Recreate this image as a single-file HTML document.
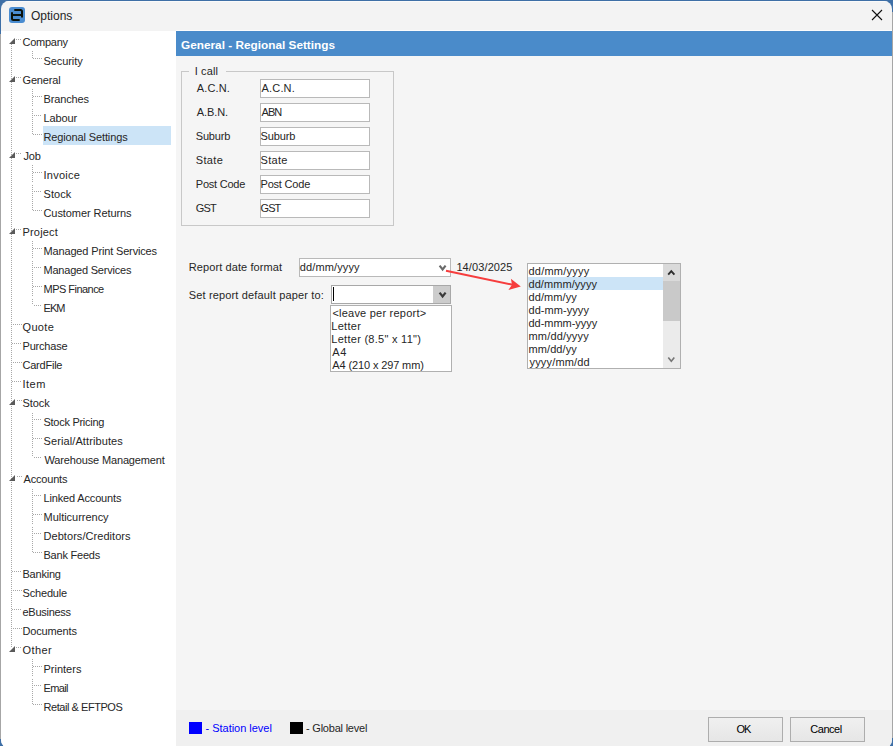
<!DOCTYPE html>
<html><head><meta charset="utf-8">
<style>
*{box-sizing:border-box;margin:0;padding:0}
html,body{width:893px;height:746px;overflow:hidden;background:#3e6fa6;font-family:"Liberation Sans",sans-serif;font-size:11px;color:#262626}
.a{position:absolute;white-space:pre;line-height:13px}
.b{position:absolute}
.btn{background:linear-gradient(#f0f0f0,#e6e6e6);border:1px solid #adadad;text-align:center;line-height:23px;color:#000}
#w{position:absolute;left:0;top:0;width:893px;height:748px;clip-path:inset(1px 1px 0px 1px round 8px)}
</style></head><body>
<div class="b" style="left:0;top:34px;width:1px;height:705px;background:#a6a6a6"></div>
<div class="b" style="left:892px;top:12px;width:1px;height:726px;background:#a6a6a6"></div>
<div id="w">
<div class="b" style="left:0;top:0;width:893px;height:748px;background:#f3f3f3"></div>
<div class="b" style="left:1px;top:1px;width:891px;height:1px;background:#fafafa"></div>
<div class="b" style="left:176px;top:30px;width:716px;height:1px;background:#fcfcfc"></div>
<div class="b" style="left:1px;top:31px;width:175px;height:717px;background:#fff"></div>
<div class="b" style="left:176px;top:31px;width:716px;height:679px;background:#f5f5f5"></div>
<div class="b" style="left:176px;top:710px;width:716px;height:38px;background:#f0f0f0"></div>
<div class="b" style="left:176px;top:31px;width:716px;height:25px;background:#4a8bca"></div>
<div class="a" style="left:181px;top:39px;color:#fff;font-weight:bold;font-size:11.8px">General - Regional Settings</div>
<svg class="b" style="left:9px;top:7px" width="16" height="16" viewBox="0 0 16 16">
  <rect x="0" y="0" width="16" height="16" rx="3" fill="#4a8cd0"/>
  <path d="M5.3 3H11.5Q13 3 13 4.5V10.5M2.5 8H12M3 5.3V11.5Q3 13 4.5 13H10.7" stroke="#0b120b" stroke-width="2" fill="none"/>
</svg>
<div class="a" style="left:31px;top:10px;font-size:12px">Options</div>
<svg class="b" style="left:871px;top:9px" width="12" height="12" viewBox="0 0 12 12">
  <path d="M1 1L11 11M11 1L1 11" stroke="#111" stroke-width="1.1"/>
</svg>
<svg class="b" style="left:0;top:0" width="180" height="746"><rect x="16" y="39" width="1" height="1" fill="#a8a8a8"/><rect x="18" y="39" width="1" height="1" fill="#a8a8a8"/><rect x="20" y="39" width="1" height="1" fill="#a8a8a8"/><rect x="32" y="51" width="1" height="1" fill="#a8a8a8"/><rect x="32" y="53" width="1" height="1" fill="#a8a8a8"/><rect x="32" y="55" width="1" height="1" fill="#a8a8a8"/><rect x="32" y="57" width="1" height="1" fill="#a8a8a8"/><rect x="33" y="58" width="1" height="1" fill="#a8a8a8"/><rect x="35" y="58" width="1" height="1" fill="#a8a8a8"/><rect x="37" y="58" width="1" height="1" fill="#a8a8a8"/><rect x="39" y="58" width="1" height="1" fill="#a8a8a8"/><rect x="41" y="58" width="1" height="1" fill="#a8a8a8"/><rect x="16" y="77" width="1" height="1" fill="#a8a8a8"/><rect x="18" y="77" width="1" height="1" fill="#a8a8a8"/><rect x="20" y="77" width="1" height="1" fill="#a8a8a8"/><rect x="32" y="89" width="1" height="1" fill="#a8a8a8"/><rect x="32" y="91" width="1" height="1" fill="#a8a8a8"/><rect x="32" y="93" width="1" height="1" fill="#a8a8a8"/><rect x="32" y="95" width="1" height="1" fill="#a8a8a8"/><rect x="32" y="97" width="1" height="1" fill="#a8a8a8"/><rect x="32" y="99" width="1" height="1" fill="#a8a8a8"/><rect x="32" y="101" width="1" height="1" fill="#a8a8a8"/><rect x="32" y="103" width="1" height="1" fill="#a8a8a8"/><rect x="32" y="105" width="1" height="1" fill="#a8a8a8"/><rect x="33" y="96" width="1" height="1" fill="#a8a8a8"/><rect x="35" y="96" width="1" height="1" fill="#a8a8a8"/><rect x="37" y="96" width="1" height="1" fill="#a8a8a8"/><rect x="39" y="96" width="1" height="1" fill="#a8a8a8"/><rect x="41" y="96" width="1" height="1" fill="#a8a8a8"/><rect x="32" y="109" width="1" height="1" fill="#a8a8a8"/><rect x="32" y="111" width="1" height="1" fill="#a8a8a8"/><rect x="32" y="113" width="1" height="1" fill="#a8a8a8"/><rect x="32" y="115" width="1" height="1" fill="#a8a8a8"/><rect x="32" y="117" width="1" height="1" fill="#a8a8a8"/><rect x="32" y="119" width="1" height="1" fill="#a8a8a8"/><rect x="32" y="121" width="1" height="1" fill="#a8a8a8"/><rect x="32" y="123" width="1" height="1" fill="#a8a8a8"/><rect x="32" y="125" width="1" height="1" fill="#a8a8a8"/><rect x="34" y="115" width="1" height="1" fill="#a8a8a8"/><rect x="36" y="115" width="1" height="1" fill="#a8a8a8"/><rect x="38" y="115" width="1" height="1" fill="#a8a8a8"/><rect x="40" y="115" width="1" height="1" fill="#a8a8a8"/><rect x="32" y="127" width="1" height="1" fill="#a8a8a8"/><rect x="32" y="129" width="1" height="1" fill="#a8a8a8"/><rect x="32" y="131" width="1" height="1" fill="#a8a8a8"/><rect x="32" y="133" width="1" height="1" fill="#a8a8a8"/><rect x="33" y="134" width="1" height="1" fill="#a8a8a8"/><rect x="35" y="134" width="1" height="1" fill="#a8a8a8"/><rect x="37" y="134" width="1" height="1" fill="#a8a8a8"/><rect x="39" y="134" width="1" height="1" fill="#a8a8a8"/><rect x="41" y="134" width="1" height="1" fill="#a8a8a8"/><rect x="16" y="153" width="1" height="1" fill="#a8a8a8"/><rect x="18" y="153" width="1" height="1" fill="#a8a8a8"/><rect x="20" y="153" width="1" height="1" fill="#a8a8a8"/><rect x="32" y="165" width="1" height="1" fill="#a8a8a8"/><rect x="32" y="167" width="1" height="1" fill="#a8a8a8"/><rect x="32" y="169" width="1" height="1" fill="#a8a8a8"/><rect x="32" y="171" width="1" height="1" fill="#a8a8a8"/><rect x="32" y="173" width="1" height="1" fill="#a8a8a8"/><rect x="32" y="175" width="1" height="1" fill="#a8a8a8"/><rect x="32" y="177" width="1" height="1" fill="#a8a8a8"/><rect x="32" y="179" width="1" height="1" fill="#a8a8a8"/><rect x="32" y="181" width="1" height="1" fill="#a8a8a8"/><rect x="33" y="172" width="1" height="1" fill="#a8a8a8"/><rect x="35" y="172" width="1" height="1" fill="#a8a8a8"/><rect x="37" y="172" width="1" height="1" fill="#a8a8a8"/><rect x="39" y="172" width="1" height="1" fill="#a8a8a8"/><rect x="41" y="172" width="1" height="1" fill="#a8a8a8"/><rect x="32" y="185" width="1" height="1" fill="#a8a8a8"/><rect x="32" y="187" width="1" height="1" fill="#a8a8a8"/><rect x="32" y="189" width="1" height="1" fill="#a8a8a8"/><rect x="32" y="191" width="1" height="1" fill="#a8a8a8"/><rect x="32" y="193" width="1" height="1" fill="#a8a8a8"/><rect x="32" y="195" width="1" height="1" fill="#a8a8a8"/><rect x="32" y="197" width="1" height="1" fill="#a8a8a8"/><rect x="32" y="199" width="1" height="1" fill="#a8a8a8"/><rect x="32" y="201" width="1" height="1" fill="#a8a8a8"/><rect x="34" y="191" width="1" height="1" fill="#a8a8a8"/><rect x="36" y="191" width="1" height="1" fill="#a8a8a8"/><rect x="38" y="191" width="1" height="1" fill="#a8a8a8"/><rect x="40" y="191" width="1" height="1" fill="#a8a8a8"/><rect x="32" y="203" width="1" height="1" fill="#a8a8a8"/><rect x="32" y="205" width="1" height="1" fill="#a8a8a8"/><rect x="32" y="207" width="1" height="1" fill="#a8a8a8"/><rect x="32" y="209" width="1" height="1" fill="#a8a8a8"/><rect x="33" y="210" width="1" height="1" fill="#a8a8a8"/><rect x="35" y="210" width="1" height="1" fill="#a8a8a8"/><rect x="37" y="210" width="1" height="1" fill="#a8a8a8"/><rect x="39" y="210" width="1" height="1" fill="#a8a8a8"/><rect x="41" y="210" width="1" height="1" fill="#a8a8a8"/><rect x="16" y="229" width="1" height="1" fill="#a8a8a8"/><rect x="18" y="229" width="1" height="1" fill="#a8a8a8"/><rect x="20" y="229" width="1" height="1" fill="#a8a8a8"/><rect x="32" y="241" width="1" height="1" fill="#a8a8a8"/><rect x="32" y="243" width="1" height="1" fill="#a8a8a8"/><rect x="32" y="245" width="1" height="1" fill="#a8a8a8"/><rect x="32" y="247" width="1" height="1" fill="#a8a8a8"/><rect x="32" y="249" width="1" height="1" fill="#a8a8a8"/><rect x="32" y="251" width="1" height="1" fill="#a8a8a8"/><rect x="32" y="253" width="1" height="1" fill="#a8a8a8"/><rect x="32" y="255" width="1" height="1" fill="#a8a8a8"/><rect x="32" y="257" width="1" height="1" fill="#a8a8a8"/><rect x="33" y="248" width="1" height="1" fill="#a8a8a8"/><rect x="35" y="248" width="1" height="1" fill="#a8a8a8"/><rect x="37" y="248" width="1" height="1" fill="#a8a8a8"/><rect x="39" y="248" width="1" height="1" fill="#a8a8a8"/><rect x="41" y="248" width="1" height="1" fill="#a8a8a8"/><rect x="32" y="261" width="1" height="1" fill="#a8a8a8"/><rect x="32" y="263" width="1" height="1" fill="#a8a8a8"/><rect x="32" y="265" width="1" height="1" fill="#a8a8a8"/><rect x="32" y="267" width="1" height="1" fill="#a8a8a8"/><rect x="32" y="269" width="1" height="1" fill="#a8a8a8"/><rect x="32" y="271" width="1" height="1" fill="#a8a8a8"/><rect x="32" y="273" width="1" height="1" fill="#a8a8a8"/><rect x="32" y="275" width="1" height="1" fill="#a8a8a8"/><rect x="32" y="277" width="1" height="1" fill="#a8a8a8"/><rect x="34" y="267" width="1" height="1" fill="#a8a8a8"/><rect x="36" y="267" width="1" height="1" fill="#a8a8a8"/><rect x="38" y="267" width="1" height="1" fill="#a8a8a8"/><rect x="40" y="267" width="1" height="1" fill="#a8a8a8"/><rect x="32" y="279" width="1" height="1" fill="#a8a8a8"/><rect x="32" y="281" width="1" height="1" fill="#a8a8a8"/><rect x="32" y="283" width="1" height="1" fill="#a8a8a8"/><rect x="32" y="285" width="1" height="1" fill="#a8a8a8"/><rect x="32" y="287" width="1" height="1" fill="#a8a8a8"/><rect x="32" y="289" width="1" height="1" fill="#a8a8a8"/><rect x="32" y="291" width="1" height="1" fill="#a8a8a8"/><rect x="32" y="293" width="1" height="1" fill="#a8a8a8"/><rect x="32" y="295" width="1" height="1" fill="#a8a8a8"/><rect x="33" y="286" width="1" height="1" fill="#a8a8a8"/><rect x="35" y="286" width="1" height="1" fill="#a8a8a8"/><rect x="37" y="286" width="1" height="1" fill="#a8a8a8"/><rect x="39" y="286" width="1" height="1" fill="#a8a8a8"/><rect x="41" y="286" width="1" height="1" fill="#a8a8a8"/><rect x="32" y="299" width="1" height="1" fill="#a8a8a8"/><rect x="32" y="301" width="1" height="1" fill="#a8a8a8"/><rect x="32" y="303" width="1" height="1" fill="#a8a8a8"/><rect x="34" y="305" width="1" height="1" fill="#a8a8a8"/><rect x="36" y="305" width="1" height="1" fill="#a8a8a8"/><rect x="38" y="305" width="1" height="1" fill="#a8a8a8"/><rect x="40" y="305" width="1" height="1" fill="#a8a8a8"/><rect x="13" y="324" width="1" height="1" fill="#a8a8a8"/><rect x="15" y="324" width="1" height="1" fill="#a8a8a8"/><rect x="17" y="324" width="1" height="1" fill="#a8a8a8"/><rect x="19" y="324" width="1" height="1" fill="#a8a8a8"/><rect x="21" y="324" width="1" height="1" fill="#a8a8a8"/><rect x="12" y="343" width="1" height="1" fill="#a8a8a8"/><rect x="14" y="343" width="1" height="1" fill="#a8a8a8"/><rect x="16" y="343" width="1" height="1" fill="#a8a8a8"/><rect x="18" y="343" width="1" height="1" fill="#a8a8a8"/><rect x="20" y="343" width="1" height="1" fill="#a8a8a8"/><rect x="13" y="362" width="1" height="1" fill="#a8a8a8"/><rect x="15" y="362" width="1" height="1" fill="#a8a8a8"/><rect x="17" y="362" width="1" height="1" fill="#a8a8a8"/><rect x="19" y="362" width="1" height="1" fill="#a8a8a8"/><rect x="21" y="362" width="1" height="1" fill="#a8a8a8"/><rect x="12" y="381" width="1" height="1" fill="#a8a8a8"/><rect x="14" y="381" width="1" height="1" fill="#a8a8a8"/><rect x="16" y="381" width="1" height="1" fill="#a8a8a8"/><rect x="18" y="381" width="1" height="1" fill="#a8a8a8"/><rect x="20" y="381" width="1" height="1" fill="#a8a8a8"/><rect x="17" y="400" width="1" height="1" fill="#a8a8a8"/><rect x="19" y="400" width="1" height="1" fill="#a8a8a8"/><rect x="21" y="400" width="1" height="1" fill="#a8a8a8"/><rect x="32" y="413" width="1" height="1" fill="#a8a8a8"/><rect x="32" y="415" width="1" height="1" fill="#a8a8a8"/><rect x="32" y="417" width="1" height="1" fill="#a8a8a8"/><rect x="32" y="419" width="1" height="1" fill="#a8a8a8"/><rect x="32" y="421" width="1" height="1" fill="#a8a8a8"/><rect x="32" y="423" width="1" height="1" fill="#a8a8a8"/><rect x="32" y="425" width="1" height="1" fill="#a8a8a8"/><rect x="32" y="427" width="1" height="1" fill="#a8a8a8"/><rect x="32" y="429" width="1" height="1" fill="#a8a8a8"/><rect x="34" y="419" width="1" height="1" fill="#a8a8a8"/><rect x="36" y="419" width="1" height="1" fill="#a8a8a8"/><rect x="38" y="419" width="1" height="1" fill="#a8a8a8"/><rect x="40" y="419" width="1" height="1" fill="#a8a8a8"/><rect x="32" y="431" width="1" height="1" fill="#a8a8a8"/><rect x="32" y="433" width="1" height="1" fill="#a8a8a8"/><rect x="32" y="435" width="1" height="1" fill="#a8a8a8"/><rect x="32" y="437" width="1" height="1" fill="#a8a8a8"/><rect x="32" y="439" width="1" height="1" fill="#a8a8a8"/><rect x="32" y="441" width="1" height="1" fill="#a8a8a8"/><rect x="32" y="443" width="1" height="1" fill="#a8a8a8"/><rect x="32" y="445" width="1" height="1" fill="#a8a8a8"/><rect x="32" y="447" width="1" height="1" fill="#a8a8a8"/><rect x="33" y="438" width="1" height="1" fill="#a8a8a8"/><rect x="35" y="438" width="1" height="1" fill="#a8a8a8"/><rect x="37" y="438" width="1" height="1" fill="#a8a8a8"/><rect x="39" y="438" width="1" height="1" fill="#a8a8a8"/><rect x="41" y="438" width="1" height="1" fill="#a8a8a8"/><rect x="32" y="451" width="1" height="1" fill="#a8a8a8"/><rect x="32" y="453" width="1" height="1" fill="#a8a8a8"/><rect x="32" y="455" width="1" height="1" fill="#a8a8a8"/><rect x="34" y="457" width="1" height="1" fill="#a8a8a8"/><rect x="36" y="457" width="1" height="1" fill="#a8a8a8"/><rect x="38" y="457" width="1" height="1" fill="#a8a8a8"/><rect x="40" y="457" width="1" height="1" fill="#a8a8a8"/><rect x="17" y="476" width="1" height="1" fill="#a8a8a8"/><rect x="19" y="476" width="1" height="1" fill="#a8a8a8"/><rect x="21" y="476" width="1" height="1" fill="#a8a8a8"/><rect x="32" y="489" width="1" height="1" fill="#a8a8a8"/><rect x="32" y="491" width="1" height="1" fill="#a8a8a8"/><rect x="32" y="493" width="1" height="1" fill="#a8a8a8"/><rect x="32" y="495" width="1" height="1" fill="#a8a8a8"/><rect x="32" y="497" width="1" height="1" fill="#a8a8a8"/><rect x="32" y="499" width="1" height="1" fill="#a8a8a8"/><rect x="32" y="501" width="1" height="1" fill="#a8a8a8"/><rect x="32" y="503" width="1" height="1" fill="#a8a8a8"/><rect x="32" y="505" width="1" height="1" fill="#a8a8a8"/><rect x="34" y="495" width="1" height="1" fill="#a8a8a8"/><rect x="36" y="495" width="1" height="1" fill="#a8a8a8"/><rect x="38" y="495" width="1" height="1" fill="#a8a8a8"/><rect x="40" y="495" width="1" height="1" fill="#a8a8a8"/><rect x="32" y="507" width="1" height="1" fill="#a8a8a8"/><rect x="32" y="509" width="1" height="1" fill="#a8a8a8"/><rect x="32" y="511" width="1" height="1" fill="#a8a8a8"/><rect x="32" y="513" width="1" height="1" fill="#a8a8a8"/><rect x="32" y="515" width="1" height="1" fill="#a8a8a8"/><rect x="32" y="517" width="1" height="1" fill="#a8a8a8"/><rect x="32" y="519" width="1" height="1" fill="#a8a8a8"/><rect x="32" y="521" width="1" height="1" fill="#a8a8a8"/><rect x="32" y="523" width="1" height="1" fill="#a8a8a8"/><rect x="33" y="514" width="1" height="1" fill="#a8a8a8"/><rect x="35" y="514" width="1" height="1" fill="#a8a8a8"/><rect x="37" y="514" width="1" height="1" fill="#a8a8a8"/><rect x="39" y="514" width="1" height="1" fill="#a8a8a8"/><rect x="41" y="514" width="1" height="1" fill="#a8a8a8"/><rect x="32" y="527" width="1" height="1" fill="#a8a8a8"/><rect x="32" y="529" width="1" height="1" fill="#a8a8a8"/><rect x="32" y="531" width="1" height="1" fill="#a8a8a8"/><rect x="32" y="533" width="1" height="1" fill="#a8a8a8"/><rect x="32" y="535" width="1" height="1" fill="#a8a8a8"/><rect x="32" y="537" width="1" height="1" fill="#a8a8a8"/><rect x="32" y="539" width="1" height="1" fill="#a8a8a8"/><rect x="32" y="541" width="1" height="1" fill="#a8a8a8"/><rect x="32" y="543" width="1" height="1" fill="#a8a8a8"/><rect x="34" y="533" width="1" height="1" fill="#a8a8a8"/><rect x="36" y="533" width="1" height="1" fill="#a8a8a8"/><rect x="38" y="533" width="1" height="1" fill="#a8a8a8"/><rect x="40" y="533" width="1" height="1" fill="#a8a8a8"/><rect x="32" y="545" width="1" height="1" fill="#a8a8a8"/><rect x="32" y="547" width="1" height="1" fill="#a8a8a8"/><rect x="32" y="549" width="1" height="1" fill="#a8a8a8"/><rect x="32" y="551" width="1" height="1" fill="#a8a8a8"/><rect x="33" y="552" width="1" height="1" fill="#a8a8a8"/><rect x="35" y="552" width="1" height="1" fill="#a8a8a8"/><rect x="37" y="552" width="1" height="1" fill="#a8a8a8"/><rect x="39" y="552" width="1" height="1" fill="#a8a8a8"/><rect x="41" y="552" width="1" height="1" fill="#a8a8a8"/><rect x="12" y="571" width="1" height="1" fill="#a8a8a8"/><rect x="14" y="571" width="1" height="1" fill="#a8a8a8"/><rect x="16" y="571" width="1" height="1" fill="#a8a8a8"/><rect x="18" y="571" width="1" height="1" fill="#a8a8a8"/><rect x="20" y="571" width="1" height="1" fill="#a8a8a8"/><rect x="13" y="590" width="1" height="1" fill="#a8a8a8"/><rect x="15" y="590" width="1" height="1" fill="#a8a8a8"/><rect x="17" y="590" width="1" height="1" fill="#a8a8a8"/><rect x="19" y="590" width="1" height="1" fill="#a8a8a8"/><rect x="21" y="590" width="1" height="1" fill="#a8a8a8"/><rect x="12" y="609" width="1" height="1" fill="#a8a8a8"/><rect x="14" y="609" width="1" height="1" fill="#a8a8a8"/><rect x="16" y="609" width="1" height="1" fill="#a8a8a8"/><rect x="18" y="609" width="1" height="1" fill="#a8a8a8"/><rect x="20" y="609" width="1" height="1" fill="#a8a8a8"/><rect x="13" y="628" width="1" height="1" fill="#a8a8a8"/><rect x="15" y="628" width="1" height="1" fill="#a8a8a8"/><rect x="17" y="628" width="1" height="1" fill="#a8a8a8"/><rect x="19" y="628" width="1" height="1" fill="#a8a8a8"/><rect x="21" y="628" width="1" height="1" fill="#a8a8a8"/><rect x="16" y="647" width="1" height="1" fill="#a8a8a8"/><rect x="18" y="647" width="1" height="1" fill="#a8a8a8"/><rect x="20" y="647" width="1" height="1" fill="#a8a8a8"/><rect x="32" y="659" width="1" height="1" fill="#a8a8a8"/><rect x="32" y="661" width="1" height="1" fill="#a8a8a8"/><rect x="32" y="663" width="1" height="1" fill="#a8a8a8"/><rect x="32" y="665" width="1" height="1" fill="#a8a8a8"/><rect x="32" y="667" width="1" height="1" fill="#a8a8a8"/><rect x="32" y="669" width="1" height="1" fill="#a8a8a8"/><rect x="32" y="671" width="1" height="1" fill="#a8a8a8"/><rect x="32" y="673" width="1" height="1" fill="#a8a8a8"/><rect x="32" y="675" width="1" height="1" fill="#a8a8a8"/><rect x="33" y="666" width="1" height="1" fill="#a8a8a8"/><rect x="35" y="666" width="1" height="1" fill="#a8a8a8"/><rect x="37" y="666" width="1" height="1" fill="#a8a8a8"/><rect x="39" y="666" width="1" height="1" fill="#a8a8a8"/><rect x="41" y="666" width="1" height="1" fill="#a8a8a8"/><rect x="32" y="679" width="1" height="1" fill="#a8a8a8"/><rect x="32" y="681" width="1" height="1" fill="#a8a8a8"/><rect x="32" y="683" width="1" height="1" fill="#a8a8a8"/><rect x="32" y="685" width="1" height="1" fill="#a8a8a8"/><rect x="32" y="687" width="1" height="1" fill="#a8a8a8"/><rect x="32" y="689" width="1" height="1" fill="#a8a8a8"/><rect x="32" y="691" width="1" height="1" fill="#a8a8a8"/><rect x="32" y="693" width="1" height="1" fill="#a8a8a8"/><rect x="32" y="695" width="1" height="1" fill="#a8a8a8"/><rect x="34" y="685" width="1" height="1" fill="#a8a8a8"/><rect x="36" y="685" width="1" height="1" fill="#a8a8a8"/><rect x="38" y="685" width="1" height="1" fill="#a8a8a8"/><rect x="40" y="685" width="1" height="1" fill="#a8a8a8"/><rect x="32" y="697" width="1" height="1" fill="#a8a8a8"/><rect x="32" y="699" width="1" height="1" fill="#a8a8a8"/><rect x="32" y="701" width="1" height="1" fill="#a8a8a8"/><rect x="32" y="703" width="1" height="1" fill="#a8a8a8"/><rect x="33" y="704" width="1" height="1" fill="#a8a8a8"/><rect x="35" y="704" width="1" height="1" fill="#a8a8a8"/><rect x="37" y="704" width="1" height="1" fill="#a8a8a8"/><rect x="39" y="704" width="1" height="1" fill="#a8a8a8"/><rect x="41" y="704" width="1" height="1" fill="#a8a8a8"/><rect x="11" y="44" width="1" height="1" fill="#a8a8a8"/><rect x="11" y="46" width="1" height="1" fill="#a8a8a8"/><rect x="11" y="48" width="1" height="1" fill="#a8a8a8"/><rect x="11" y="50" width="1" height="1" fill="#a8a8a8"/><rect x="11" y="52" width="1" height="1" fill="#a8a8a8"/><rect x="11" y="54" width="1" height="1" fill="#a8a8a8"/><rect x="11" y="56" width="1" height="1" fill="#a8a8a8"/><rect x="11" y="58" width="1" height="1" fill="#a8a8a8"/><rect x="11" y="60" width="1" height="1" fill="#a8a8a8"/><rect x="11" y="62" width="1" height="1" fill="#a8a8a8"/><rect x="11" y="64" width="1" height="1" fill="#a8a8a8"/><rect x="11" y="66" width="1" height="1" fill="#a8a8a8"/><rect x="11" y="68" width="1" height="1" fill="#a8a8a8"/><rect x="11" y="70" width="1" height="1" fill="#a8a8a8"/><rect x="11" y="72" width="1" height="1" fill="#a8a8a8"/><rect x="11" y="74" width="1" height="1" fill="#a8a8a8"/><rect x="11" y="76" width="1" height="1" fill="#a8a8a8"/><rect x="11" y="78" width="1" height="1" fill="#a8a8a8"/><rect x="11" y="80" width="1" height="1" fill="#a8a8a8"/><rect x="11" y="82" width="1" height="1" fill="#a8a8a8"/><rect x="11" y="84" width="1" height="1" fill="#a8a8a8"/><rect x="11" y="86" width="1" height="1" fill="#a8a8a8"/><rect x="11" y="88" width="1" height="1" fill="#a8a8a8"/><rect x="11" y="90" width="1" height="1" fill="#a8a8a8"/><rect x="11" y="92" width="1" height="1" fill="#a8a8a8"/><rect x="11" y="94" width="1" height="1" fill="#a8a8a8"/><rect x="11" y="96" width="1" height="1" fill="#a8a8a8"/><rect x="11" y="98" width="1" height="1" fill="#a8a8a8"/><rect x="11" y="100" width="1" height="1" fill="#a8a8a8"/><rect x="11" y="102" width="1" height="1" fill="#a8a8a8"/><rect x="11" y="104" width="1" height="1" fill="#a8a8a8"/><rect x="11" y="106" width="1" height="1" fill="#a8a8a8"/><rect x="11" y="108" width="1" height="1" fill="#a8a8a8"/><rect x="11" y="110" width="1" height="1" fill="#a8a8a8"/><rect x="11" y="112" width="1" height="1" fill="#a8a8a8"/><rect x="11" y="114" width="1" height="1" fill="#a8a8a8"/><rect x="11" y="116" width="1" height="1" fill="#a8a8a8"/><rect x="11" y="118" width="1" height="1" fill="#a8a8a8"/><rect x="11" y="120" width="1" height="1" fill="#a8a8a8"/><rect x="11" y="122" width="1" height="1" fill="#a8a8a8"/><rect x="11" y="124" width="1" height="1" fill="#a8a8a8"/><rect x="11" y="126" width="1" height="1" fill="#a8a8a8"/><rect x="11" y="128" width="1" height="1" fill="#a8a8a8"/><rect x="11" y="130" width="1" height="1" fill="#a8a8a8"/><rect x="11" y="132" width="1" height="1" fill="#a8a8a8"/><rect x="11" y="134" width="1" height="1" fill="#a8a8a8"/><rect x="11" y="136" width="1" height="1" fill="#a8a8a8"/><rect x="11" y="138" width="1" height="1" fill="#a8a8a8"/><rect x="11" y="140" width="1" height="1" fill="#a8a8a8"/><rect x="11" y="142" width="1" height="1" fill="#a8a8a8"/><rect x="11" y="144" width="1" height="1" fill="#a8a8a8"/><rect x="11" y="146" width="1" height="1" fill="#a8a8a8"/><rect x="11" y="148" width="1" height="1" fill="#a8a8a8"/><rect x="11" y="150" width="1" height="1" fill="#a8a8a8"/><rect x="11" y="152" width="1" height="1" fill="#a8a8a8"/><rect x="11" y="154" width="1" height="1" fill="#a8a8a8"/><rect x="11" y="156" width="1" height="1" fill="#a8a8a8"/><rect x="11" y="158" width="1" height="1" fill="#a8a8a8"/><rect x="11" y="160" width="1" height="1" fill="#a8a8a8"/><rect x="11" y="162" width="1" height="1" fill="#a8a8a8"/><rect x="11" y="164" width="1" height="1" fill="#a8a8a8"/><rect x="11" y="166" width="1" height="1" fill="#a8a8a8"/><rect x="11" y="168" width="1" height="1" fill="#a8a8a8"/><rect x="11" y="170" width="1" height="1" fill="#a8a8a8"/><rect x="11" y="172" width="1" height="1" fill="#a8a8a8"/><rect x="11" y="174" width="1" height="1" fill="#a8a8a8"/><rect x="11" y="176" width="1" height="1" fill="#a8a8a8"/><rect x="11" y="178" width="1" height="1" fill="#a8a8a8"/><rect x="11" y="180" width="1" height="1" fill="#a8a8a8"/><rect x="11" y="182" width="1" height="1" fill="#a8a8a8"/><rect x="11" y="184" width="1" height="1" fill="#a8a8a8"/><rect x="11" y="186" width="1" height="1" fill="#a8a8a8"/><rect x="11" y="188" width="1" height="1" fill="#a8a8a8"/><rect x="11" y="190" width="1" height="1" fill="#a8a8a8"/><rect x="11" y="192" width="1" height="1" fill="#a8a8a8"/><rect x="11" y="194" width="1" height="1" fill="#a8a8a8"/><rect x="11" y="196" width="1" height="1" fill="#a8a8a8"/><rect x="11" y="198" width="1" height="1" fill="#a8a8a8"/><rect x="11" y="200" width="1" height="1" fill="#a8a8a8"/><rect x="11" y="202" width="1" height="1" fill="#a8a8a8"/><rect x="11" y="204" width="1" height="1" fill="#a8a8a8"/><rect x="11" y="206" width="1" height="1" fill="#a8a8a8"/><rect x="11" y="208" width="1" height="1" fill="#a8a8a8"/><rect x="11" y="210" width="1" height="1" fill="#a8a8a8"/><rect x="11" y="212" width="1" height="1" fill="#a8a8a8"/><rect x="11" y="214" width="1" height="1" fill="#a8a8a8"/><rect x="11" y="216" width="1" height="1" fill="#a8a8a8"/><rect x="11" y="218" width="1" height="1" fill="#a8a8a8"/><rect x="11" y="220" width="1" height="1" fill="#a8a8a8"/><rect x="11" y="222" width="1" height="1" fill="#a8a8a8"/><rect x="11" y="224" width="1" height="1" fill="#a8a8a8"/><rect x="11" y="226" width="1" height="1" fill="#a8a8a8"/><rect x="11" y="228" width="1" height="1" fill="#a8a8a8"/><rect x="11" y="230" width="1" height="1" fill="#a8a8a8"/><rect x="11" y="232" width="1" height="1" fill="#a8a8a8"/><rect x="11" y="234" width="1" height="1" fill="#a8a8a8"/><rect x="11" y="236" width="1" height="1" fill="#a8a8a8"/><rect x="11" y="238" width="1" height="1" fill="#a8a8a8"/><rect x="11" y="240" width="1" height="1" fill="#a8a8a8"/><rect x="11" y="242" width="1" height="1" fill="#a8a8a8"/><rect x="11" y="244" width="1" height="1" fill="#a8a8a8"/><rect x="11" y="246" width="1" height="1" fill="#a8a8a8"/><rect x="11" y="248" width="1" height="1" fill="#a8a8a8"/><rect x="11" y="250" width="1" height="1" fill="#a8a8a8"/><rect x="11" y="252" width="1" height="1" fill="#a8a8a8"/><rect x="11" y="254" width="1" height="1" fill="#a8a8a8"/><rect x="11" y="256" width="1" height="1" fill="#a8a8a8"/><rect x="11" y="258" width="1" height="1" fill="#a8a8a8"/><rect x="11" y="260" width="1" height="1" fill="#a8a8a8"/><rect x="11" y="262" width="1" height="1" fill="#a8a8a8"/><rect x="11" y="264" width="1" height="1" fill="#a8a8a8"/><rect x="11" y="266" width="1" height="1" fill="#a8a8a8"/><rect x="11" y="268" width="1" height="1" fill="#a8a8a8"/><rect x="11" y="270" width="1" height="1" fill="#a8a8a8"/><rect x="11" y="272" width="1" height="1" fill="#a8a8a8"/><rect x="11" y="274" width="1" height="1" fill="#a8a8a8"/><rect x="11" y="276" width="1" height="1" fill="#a8a8a8"/><rect x="11" y="278" width="1" height="1" fill="#a8a8a8"/><rect x="11" y="280" width="1" height="1" fill="#a8a8a8"/><rect x="11" y="282" width="1" height="1" fill="#a8a8a8"/><rect x="11" y="284" width="1" height="1" fill="#a8a8a8"/><rect x="11" y="286" width="1" height="1" fill="#a8a8a8"/><rect x="11" y="288" width="1" height="1" fill="#a8a8a8"/><rect x="11" y="290" width="1" height="1" fill="#a8a8a8"/><rect x="11" y="292" width="1" height="1" fill="#a8a8a8"/><rect x="11" y="294" width="1" height="1" fill="#a8a8a8"/><rect x="11" y="296" width="1" height="1" fill="#a8a8a8"/><rect x="11" y="298" width="1" height="1" fill="#a8a8a8"/><rect x="11" y="300" width="1" height="1" fill="#a8a8a8"/><rect x="11" y="302" width="1" height="1" fill="#a8a8a8"/><rect x="11" y="304" width="1" height="1" fill="#a8a8a8"/><rect x="11" y="306" width="1" height="1" fill="#a8a8a8"/><rect x="11" y="308" width="1" height="1" fill="#a8a8a8"/><rect x="11" y="310" width="1" height="1" fill="#a8a8a8"/><rect x="11" y="312" width="1" height="1" fill="#a8a8a8"/><rect x="11" y="314" width="1" height="1" fill="#a8a8a8"/><rect x="11" y="316" width="1" height="1" fill="#a8a8a8"/><rect x="11" y="318" width="1" height="1" fill="#a8a8a8"/><rect x="11" y="320" width="1" height="1" fill="#a8a8a8"/><rect x="11" y="322" width="1" height="1" fill="#a8a8a8"/><rect x="11" y="324" width="1" height="1" fill="#a8a8a8"/><rect x="11" y="326" width="1" height="1" fill="#a8a8a8"/><rect x="11" y="328" width="1" height="1" fill="#a8a8a8"/><rect x="11" y="330" width="1" height="1" fill="#a8a8a8"/><rect x="11" y="332" width="1" height="1" fill="#a8a8a8"/><rect x="11" y="334" width="1" height="1" fill="#a8a8a8"/><rect x="11" y="336" width="1" height="1" fill="#a8a8a8"/><rect x="11" y="338" width="1" height="1" fill="#a8a8a8"/><rect x="11" y="340" width="1" height="1" fill="#a8a8a8"/><rect x="11" y="342" width="1" height="1" fill="#a8a8a8"/><rect x="11" y="344" width="1" height="1" fill="#a8a8a8"/><rect x="11" y="346" width="1" height="1" fill="#a8a8a8"/><rect x="11" y="348" width="1" height="1" fill="#a8a8a8"/><rect x="11" y="350" width="1" height="1" fill="#a8a8a8"/><rect x="11" y="352" width="1" height="1" fill="#a8a8a8"/><rect x="11" y="354" width="1" height="1" fill="#a8a8a8"/><rect x="11" y="356" width="1" height="1" fill="#a8a8a8"/><rect x="11" y="358" width="1" height="1" fill="#a8a8a8"/><rect x="11" y="360" width="1" height="1" fill="#a8a8a8"/><rect x="11" y="362" width="1" height="1" fill="#a8a8a8"/><rect x="11" y="364" width="1" height="1" fill="#a8a8a8"/><rect x="11" y="366" width="1" height="1" fill="#a8a8a8"/><rect x="11" y="368" width="1" height="1" fill="#a8a8a8"/><rect x="11" y="370" width="1" height="1" fill="#a8a8a8"/><rect x="11" y="372" width="1" height="1" fill="#a8a8a8"/><rect x="11" y="374" width="1" height="1" fill="#a8a8a8"/><rect x="11" y="376" width="1" height="1" fill="#a8a8a8"/><rect x="11" y="378" width="1" height="1" fill="#a8a8a8"/><rect x="11" y="380" width="1" height="1" fill="#a8a8a8"/><rect x="11" y="382" width="1" height="1" fill="#a8a8a8"/><rect x="11" y="384" width="1" height="1" fill="#a8a8a8"/><rect x="11" y="386" width="1" height="1" fill="#a8a8a8"/><rect x="11" y="388" width="1" height="1" fill="#a8a8a8"/><rect x="11" y="390" width="1" height="1" fill="#a8a8a8"/><rect x="11" y="392" width="1" height="1" fill="#a8a8a8"/><rect x="11" y="394" width="1" height="1" fill="#a8a8a8"/><rect x="11" y="396" width="1" height="1" fill="#a8a8a8"/><rect x="11" y="398" width="1" height="1" fill="#a8a8a8"/><rect x="11" y="400" width="1" height="1" fill="#a8a8a8"/><rect x="11" y="402" width="1" height="1" fill="#a8a8a8"/><rect x="11" y="404" width="1" height="1" fill="#a8a8a8"/><rect x="11" y="406" width="1" height="1" fill="#a8a8a8"/><rect x="11" y="408" width="1" height="1" fill="#a8a8a8"/><rect x="11" y="410" width="1" height="1" fill="#a8a8a8"/><rect x="11" y="412" width="1" height="1" fill="#a8a8a8"/><rect x="11" y="414" width="1" height="1" fill="#a8a8a8"/><rect x="11" y="416" width="1" height="1" fill="#a8a8a8"/><rect x="11" y="418" width="1" height="1" fill="#a8a8a8"/><rect x="11" y="420" width="1" height="1" fill="#a8a8a8"/><rect x="11" y="422" width="1" height="1" fill="#a8a8a8"/><rect x="11" y="424" width="1" height="1" fill="#a8a8a8"/><rect x="11" y="426" width="1" height="1" fill="#a8a8a8"/><rect x="11" y="428" width="1" height="1" fill="#a8a8a8"/><rect x="11" y="430" width="1" height="1" fill="#a8a8a8"/><rect x="11" y="432" width="1" height="1" fill="#a8a8a8"/><rect x="11" y="434" width="1" height="1" fill="#a8a8a8"/><rect x="11" y="436" width="1" height="1" fill="#a8a8a8"/><rect x="11" y="438" width="1" height="1" fill="#a8a8a8"/><rect x="11" y="440" width="1" height="1" fill="#a8a8a8"/><rect x="11" y="442" width="1" height="1" fill="#a8a8a8"/><rect x="11" y="444" width="1" height="1" fill="#a8a8a8"/><rect x="11" y="446" width="1" height="1" fill="#a8a8a8"/><rect x="11" y="448" width="1" height="1" fill="#a8a8a8"/><rect x="11" y="450" width="1" height="1" fill="#a8a8a8"/><rect x="11" y="452" width="1" height="1" fill="#a8a8a8"/><rect x="11" y="454" width="1" height="1" fill="#a8a8a8"/><rect x="11" y="456" width="1" height="1" fill="#a8a8a8"/><rect x="11" y="458" width="1" height="1" fill="#a8a8a8"/><rect x="11" y="460" width="1" height="1" fill="#a8a8a8"/><rect x="11" y="462" width="1" height="1" fill="#a8a8a8"/><rect x="11" y="464" width="1" height="1" fill="#a8a8a8"/><rect x="11" y="466" width="1" height="1" fill="#a8a8a8"/><rect x="11" y="468" width="1" height="1" fill="#a8a8a8"/><rect x="11" y="470" width="1" height="1" fill="#a8a8a8"/><rect x="11" y="472" width="1" height="1" fill="#a8a8a8"/><rect x="11" y="474" width="1" height="1" fill="#a8a8a8"/><rect x="11" y="476" width="1" height="1" fill="#a8a8a8"/><rect x="11" y="478" width="1" height="1" fill="#a8a8a8"/><rect x="11" y="480" width="1" height="1" fill="#a8a8a8"/><rect x="11" y="482" width="1" height="1" fill="#a8a8a8"/><rect x="11" y="484" width="1" height="1" fill="#a8a8a8"/><rect x="11" y="486" width="1" height="1" fill="#a8a8a8"/><rect x="11" y="488" width="1" height="1" fill="#a8a8a8"/><rect x="11" y="490" width="1" height="1" fill="#a8a8a8"/><rect x="11" y="492" width="1" height="1" fill="#a8a8a8"/><rect x="11" y="494" width="1" height="1" fill="#a8a8a8"/><rect x="11" y="496" width="1" height="1" fill="#a8a8a8"/><rect x="11" y="498" width="1" height="1" fill="#a8a8a8"/><rect x="11" y="500" width="1" height="1" fill="#a8a8a8"/><rect x="11" y="502" width="1" height="1" fill="#a8a8a8"/><rect x="11" y="504" width="1" height="1" fill="#a8a8a8"/><rect x="11" y="506" width="1" height="1" fill="#a8a8a8"/><rect x="11" y="508" width="1" height="1" fill="#a8a8a8"/><rect x="11" y="510" width="1" height="1" fill="#a8a8a8"/><rect x="11" y="512" width="1" height="1" fill="#a8a8a8"/><rect x="11" y="514" width="1" height="1" fill="#a8a8a8"/><rect x="11" y="516" width="1" height="1" fill="#a8a8a8"/><rect x="11" y="518" width="1" height="1" fill="#a8a8a8"/><rect x="11" y="520" width="1" height="1" fill="#a8a8a8"/><rect x="11" y="522" width="1" height="1" fill="#a8a8a8"/><rect x="11" y="524" width="1" height="1" fill="#a8a8a8"/><rect x="11" y="526" width="1" height="1" fill="#a8a8a8"/><rect x="11" y="528" width="1" height="1" fill="#a8a8a8"/><rect x="11" y="530" width="1" height="1" fill="#a8a8a8"/><rect x="11" y="532" width="1" height="1" fill="#a8a8a8"/><rect x="11" y="534" width="1" height="1" fill="#a8a8a8"/><rect x="11" y="536" width="1" height="1" fill="#a8a8a8"/><rect x="11" y="538" width="1" height="1" fill="#a8a8a8"/><rect x="11" y="540" width="1" height="1" fill="#a8a8a8"/><rect x="11" y="542" width="1" height="1" fill="#a8a8a8"/><rect x="11" y="544" width="1" height="1" fill="#a8a8a8"/><rect x="11" y="546" width="1" height="1" fill="#a8a8a8"/><rect x="11" y="548" width="1" height="1" fill="#a8a8a8"/><rect x="11" y="550" width="1" height="1" fill="#a8a8a8"/><rect x="11" y="552" width="1" height="1" fill="#a8a8a8"/><rect x="11" y="554" width="1" height="1" fill="#a8a8a8"/><rect x="11" y="556" width="1" height="1" fill="#a8a8a8"/><rect x="11" y="558" width="1" height="1" fill="#a8a8a8"/><rect x="11" y="560" width="1" height="1" fill="#a8a8a8"/><rect x="11" y="562" width="1" height="1" fill="#a8a8a8"/><rect x="11" y="564" width="1" height="1" fill="#a8a8a8"/><rect x="11" y="566" width="1" height="1" fill="#a8a8a8"/><rect x="11" y="568" width="1" height="1" fill="#a8a8a8"/><rect x="11" y="570" width="1" height="1" fill="#a8a8a8"/><rect x="11" y="572" width="1" height="1" fill="#a8a8a8"/><rect x="11" y="574" width="1" height="1" fill="#a8a8a8"/><rect x="11" y="576" width="1" height="1" fill="#a8a8a8"/><rect x="11" y="578" width="1" height="1" fill="#a8a8a8"/><rect x="11" y="580" width="1" height="1" fill="#a8a8a8"/><rect x="11" y="582" width="1" height="1" fill="#a8a8a8"/><rect x="11" y="584" width="1" height="1" fill="#a8a8a8"/><rect x="11" y="586" width="1" height="1" fill="#a8a8a8"/><rect x="11" y="588" width="1" height="1" fill="#a8a8a8"/><rect x="11" y="590" width="1" height="1" fill="#a8a8a8"/><rect x="11" y="592" width="1" height="1" fill="#a8a8a8"/><rect x="11" y="594" width="1" height="1" fill="#a8a8a8"/><rect x="11" y="596" width="1" height="1" fill="#a8a8a8"/><rect x="11" y="598" width="1" height="1" fill="#a8a8a8"/><rect x="11" y="600" width="1" height="1" fill="#a8a8a8"/><rect x="11" y="602" width="1" height="1" fill="#a8a8a8"/><rect x="11" y="604" width="1" height="1" fill="#a8a8a8"/><rect x="11" y="606" width="1" height="1" fill="#a8a8a8"/><rect x="11" y="608" width="1" height="1" fill="#a8a8a8"/><rect x="11" y="610" width="1" height="1" fill="#a8a8a8"/><rect x="11" y="612" width="1" height="1" fill="#a8a8a8"/><rect x="11" y="614" width="1" height="1" fill="#a8a8a8"/><rect x="11" y="616" width="1" height="1" fill="#a8a8a8"/><rect x="11" y="618" width="1" height="1" fill="#a8a8a8"/><rect x="11" y="620" width="1" height="1" fill="#a8a8a8"/><rect x="11" y="622" width="1" height="1" fill="#a8a8a8"/><rect x="11" y="624" width="1" height="1" fill="#a8a8a8"/><rect x="11" y="626" width="1" height="1" fill="#a8a8a8"/><rect x="11" y="628" width="1" height="1" fill="#a8a8a8"/><rect x="11" y="630" width="1" height="1" fill="#a8a8a8"/><rect x="11" y="632" width="1" height="1" fill="#a8a8a8"/><rect x="11" y="634" width="1" height="1" fill="#a8a8a8"/><rect x="11" y="636" width="1" height="1" fill="#a8a8a8"/><rect x="11" y="638" width="1" height="1" fill="#a8a8a8"/><rect x="11" y="640" width="1" height="1" fill="#a8a8a8"/><rect x="11" y="642" width="1" height="1" fill="#a8a8a8"/><rect x="11" y="644" width="1" height="1" fill="#a8a8a8"/><rect x="11" y="646" width="1" height="1" fill="#a8a8a8"/><path d="M9 44H15V38Z" fill="#5a5a5a"/><path d="M9 82H15V76Z" fill="#5a5a5a"/><path d="M9 158H15V152Z" fill="#5a5a5a"/><path d="M9 234H15V228Z" fill="#5a5a5a"/><path d="M9 405H15V399Z" fill="#5a5a5a"/><path d="M9 481H15V475Z" fill="#5a5a5a"/><path d="M9 652H15V646Z" fill="#5a5a5a"/></svg>
<div class="a" style="left:22.5px;top:36px;letter-spacing:-0.25px;">Company</div><div class="a" style="left:43.5px;top:55px;letter-spacing:-0.086px;">Security</div><div class="a" style="left:22.5px;top:74px;letter-spacing:-0.167px;">General</div><div class="a" style="left:43.5px;top:93px;letter-spacing:-0.143px;">Branches</div><div class="a" style="left:43.5px;top:112px;letter-spacing:-0.14px;">Labour</div><div class="b" style="left:43px;top:126px;width:128px;height:19px;background:#cce4f7"></div><div class="a" style="left:43.5px;top:131px;letter-spacing:-0.131px;">Regional Settings</div><div class="a" style="left:23.5px;top:150px;letter-spacing:-0.2px;">Job</div><div class="a" style="left:43.5px;top:169px;letter-spacing:0.25px;">Invoice</div><div class="a" style="left:43.5px;top:188px;letter-spacing:0.05px;">Stock</div><div class="a" style="left:43.5px;top:207px;letter-spacing:-0.08px;">Customer Returns</div><div class="a" style="left:22.5px;top:226px;letter-spacing:0.183px;">Project</div><div class="a" style="left:43.5px;top:245px;letter-spacing:-0.152px;">Managed Print Services</div><div class="a" style="left:43.5px;top:264px;letter-spacing:-0.213px;">Managed Services</div><div class="a" style="left:43.5px;top:283px;letter-spacing:-0.53px;">MPS Finance</div><div class="a" style="left:43.5px;top:302px;letter-spacing:-0.9px;">EKM</div><div class="a" style="left:22.5px;top:321px;letter-spacing:0.325px;">Quote</div><div class="a" style="left:22.5px;top:340px;letter-spacing:-0.186px;">Purchase</div><div class="a" style="left:22.5px;top:359px;letter-spacing:-0.229px;">CardFile</div><div class="a" style="left:22.5px;top:378px;letter-spacing:0.5px;">Item</div><div class="a" style="left:22.5px;top:397px;letter-spacing:-0.05px;">Stock</div><div class="a" style="left:43.5px;top:416px;letter-spacing:-0.275px;">Stock Pricing</div><div class="a" style="left:43.5px;top:435px;letter-spacing:0.106px;">Serial/Attributes</div><div class="a" style="left:44.5px;top:454px;letter-spacing:-0.147px;">Warehouse Management</div><div class="a" style="left:23.5px;top:473px;letter-spacing:-0.186px;">Accounts</div><div class="a" style="left:43.5px;top:492px;letter-spacing:-0.157px;">Linked Accounts</div><div class="a" style="left:43.5px;top:511px;letter-spacing:-0.025px;">Multicurrency</div><div class="a" style="left:43.5px;top:530px;letter-spacing:0.056px;">Debtors/Creditors</div><div class="a" style="left:43.5px;top:549px;letter-spacing:-0.222px;">Bank Feeds</div><div class="a" style="left:22.5px;top:568px;letter-spacing:-0.217px;">Banking</div><div class="a" style="left:22.5px;top:587px;letter-spacing:-0.171px;">Schedule</div><div class="a" style="left:22.5px;top:606px;letter-spacing:-0.275px;">eBusiness</div><div class="a" style="left:22.5px;top:625px;letter-spacing:-0.15px;">Documents</div><div class="a" style="left:22.5px;top:644px;letter-spacing:0.4px;">Other</div><div class="a" style="left:43.5px;top:663px;letter-spacing:0.0px;">Printers</div><div class="a" style="left:43.5px;top:682px;letter-spacing:-0.625px;">Email</div><div class="a" style="left:43.5px;top:701px;letter-spacing:-0.45px;">Retail &amp; EFTPOS</div><div class="b" style="left:181px;top:71px;width:213px;height:155px;border:1px solid #c8c8c8"></div><div class="b" style="left:189px;top:67px;width:37px;height:8px;background:#f5f5f5"></div><div class="a" style="left:194.7px;top:65px;letter-spacing:0.12px;">I call</div><div class="a" style="left:196.8px;top:82px;letter-spacing:0.14px;">A.C.N.</div><div class="b" style="left:260px;top:79px;width:110px;height:19px;background:#fff;border:1px solid #b9b9b9"></div><div class="a" style="left:261.5px;top:82px;letter-spacing:0.18px;">A.C.N.</div><div class="a" style="left:196.8px;top:106px;letter-spacing:-0.1px;">A.B.N.</div><div class="b" style="left:260px;top:103px;width:110px;height:19px;background:#fff;border:1px solid #b9b9b9"></div><div class="a" style="left:261.5px;top:106px;letter-spacing:-0.9px;">ABN</div><div class="a" style="left:195.8px;top:130px;letter-spacing:-0.2px;">Suburb</div><div class="b" style="left:260px;top:127px;width:110px;height:19px;background:#fff;border:1px solid #b9b9b9"></div><div class="a" style="left:260.5px;top:130px;letter-spacing:-0.12px;">Suburb</div><div class="a" style="left:195.8px;top:154px;letter-spacing:0.325px;">State</div><div class="b" style="left:260px;top:151px;width:110px;height:19px;background:#fff;border:1px solid #b9b9b9"></div><div class="a" style="left:260.5px;top:154px;letter-spacing:0.325px;">State</div><div class="a" style="left:195.8px;top:178px;letter-spacing:-0.225px;">Post Code</div><div class="b" style="left:260px;top:175px;width:110px;height:19px;background:#fff;border:1px solid #b9b9b9"></div><div class="a" style="left:260.5px;top:178px;letter-spacing:-0.2px;">Post Code</div><div class="a" style="left:195.8px;top:202px;letter-spacing:-0.9px;">GST</div><div class="b" style="left:260px;top:199px;width:110px;height:19px;background:#fff;border:1px solid #b9b9b9"></div><div class="a" style="left:260.5px;top:202px;letter-spacing:-0.9px;">GST</div><div class="a" style="left:188.7px;top:261px;letter-spacing:0.1px;">Report date format</div><div class="b" style="left:299px;top:258px;width:152px;height:19px;background:#fff;border:1px solid #b9b9b9"></div><div class="a" style="left:299.8px;top:261px;letter-spacing:0.122px;">dd/mm/yyyy</div><svg class="b" style="left:438px;top:264px" width="10" height="8" viewBox="0 0 10 8"><path d="M1.6 1.6L4.6 5.5L7.6 1.6" stroke="#6a6a6a" stroke-width="2.1" fill="none"/></svg><div class="a" style="left:456.4px;top:261px;letter-spacing:0.111px;">14/03/2025</div><div class="a" style="left:188.7px;top:289px;letter-spacing:0.159px;">Set report default paper to:</div><div class="b" style="left:331px;top:285px;width:120px;height:19px;background:#fff;border:1px solid #a8a8a8"></div><div class="b" style="left:433px;top:286px;width:17px;height:17px;background:#cccccc"></div><svg class="b" style="left:438px;top:291px" width="10" height="8" viewBox="0 0 10 8"><path d="M1.6 1.6L4.6 5.5L7.6 1.6" stroke="#3a3a3a" stroke-width="2.2" fill="none"/></svg><div class="b" style="left:333px;top:287px;width:1px;height:14px;background:#000"></div><div class="b" style="left:330px;top:305px;width:122px;height:67px;background:#fff;border:1px solid #b0b0b0"></div><div class="a" style="left:332.4px;top:307px;letter-spacing:0.224px;">&lt;leave per report&gt;</div><div class="a" style="left:331.3px;top:320px;letter-spacing:0.28px;">Letter</div><div class="a" style="left:331.3px;top:333px;letter-spacing:0.278px;">Letter (8.5" x 11")</div><div class="a" style="left:332.3px;top:346px;letter-spacing:0.5px;">A4</div><div class="a" style="left:332.3px;top:359px;letter-spacing:-0.125px;">A4 (210 x 297 mm)</div><div class="b" style="left:527px;top:263px;width:154px;height:106px;background:#fff;border:1px solid #b0b0b0"></div><div class="b" style="left:528px;top:277px;width:135px;height:13px;background:#cce4f7"></div><div class="a" style="left:528.5px;top:265px;letter-spacing:0.222px;">dd/mm/yyyy</div><div class="a" style="left:528.5px;top:278px;letter-spacing:0.06px;">dd/mmm/yyyy</div><div class="a" style="left:528.5px;top:291px;letter-spacing:0.086px;">dd/mm/yy</div><div class="a" style="left:528.5px;top:304px;letter-spacing:0.056px;">dd-mm-yyyy</div><div class="a" style="left:528.5px;top:317px;letter-spacing:-0.04px;">dd-mmm-yyyy</div><div class="a" style="left:528.5px;top:330px;letter-spacing:0.167px;">mm/dd/yyyy</div><div class="a" style="left:528.5px;top:343px;letter-spacing:0.086px;">mm/dd/yy</div><div class="a" style="left:529.5px;top:356px;letter-spacing:0.167px;">yyyy/mm/dd</div><div class="b" style="left:663px;top:264px;width:17px;height:104px;background:#ebebeb"></div><div class="b" style="left:663px;top:264px;width:17px;height:17px;background:#dadada"></div><div class="b" style="left:663px;top:281px;width:17px;height:40px;background:#c9c9c9"></div><svg class="b" style="left:663px;top:264px" width="17" height="17" viewBox="0 0 17 17"><path d="M5.2 10.6L8.3 7.1L11.4 10.6" stroke="#2e2e2e" stroke-width="1.9" fill="none"/></svg><svg class="b" style="left:663px;top:352px" width="17" height="16" viewBox="0 0 17 16"><path d="M5.3 5.5L8.3 9.3L11.3 5.5" stroke="#767676" stroke-width="1.6" fill="none"/></svg><svg class="b" style="left:0;top:0" width="893" height="746"><path d="M446 270.8L513 284.8" stroke="#f63d3d" stroke-width="2.0"/><path d="M520.8 286.5L510.9 278.8L512 284.8L508.4 290Z" fill="#f63d3d"/></svg><div class="b" style="left:189px;top:722px;width:13px;height:12px;background:#0000ff"></div><div class="a" style="left:205.5px;top:722px;letter-spacing:-0.021px;color:#0000ff">- Station level</div><div class="b" style="left:290px;top:722px;width:13px;height:12px;background:#000"></div><div class="a" style="left:306.0px;top:722px;letter-spacing:-0.215px;">- Global level</div><div class="b btn" style="left:708px;top:717px;width:75px;height:25px;letter-spacing:-0.9px;padding-right:4px">OK</div><div class="b btn" style="left:790px;top:717px;width:75px;height:25px;letter-spacing:-0.45px;padding-right:3px">Cancel</div>
</div>
</body></html>
